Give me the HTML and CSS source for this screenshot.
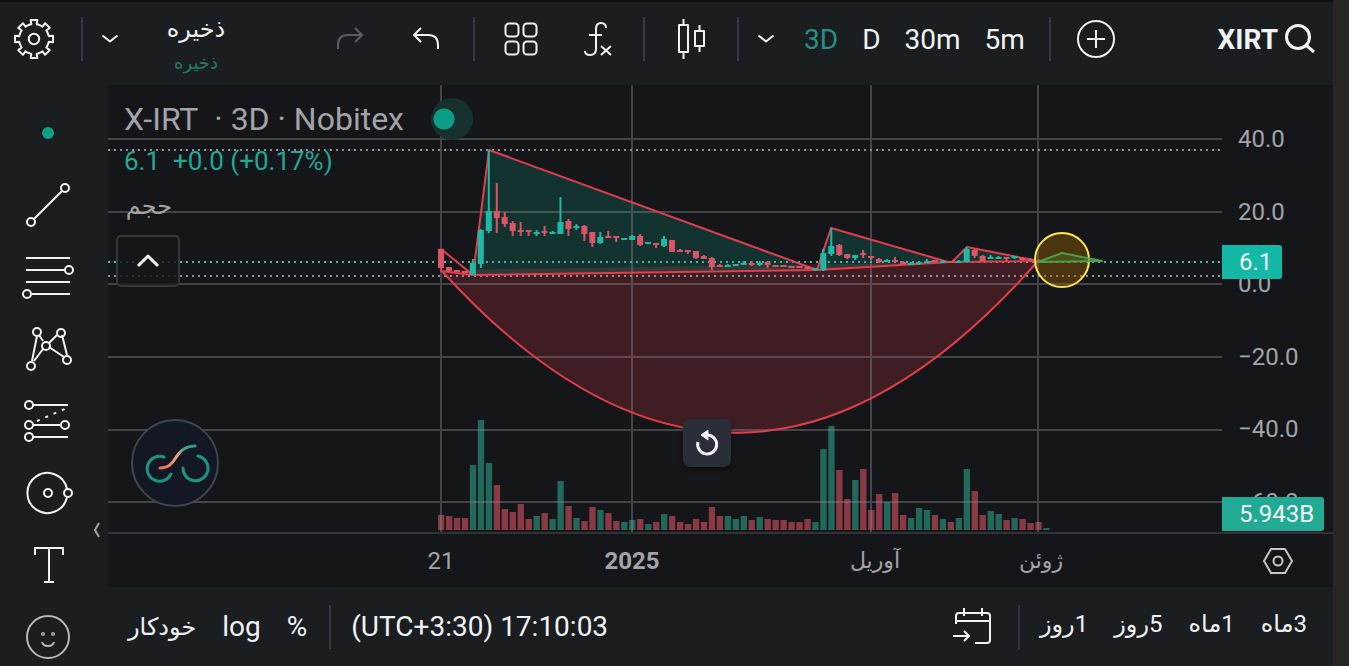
FILE: index.html
```html
<!DOCTYPE html>
<html lang="fa">
<head>
    <meta charset="UTF-8">
    <meta name="viewport" content="width=device-width, initial-scale=1.0">
    <title>XIRT 6.1</title>
    <link rel="stylesheet" href="styles.css">
</head>
<body>
    <header class="topbar">
        <div class="group group-settings">
            <button class="icon-btn" aria-label="Settings">
                <svg width="44" height="44" viewBox="-22 -22 44 44"><path id="gear" d=""/><circle r="5.2"/></svg>
            </button>
        </div>
        <div class="group group-save">
            <button class="chevron-btn" aria-label="Layouts">
                <svg width="20" height="12" viewBox="0 0 20 12"><path d="M2.500 2.500L10 8.500L17.500 2.500"/></svg>
            </button>
            <button class="save-btn" dir="rtl"><span>ذخیره</span><small>ذخیره</small></button>
            <button class="icon-btn redo" aria-label="Redo" disabled>
                <svg width="30" height="26" viewBox="0 0 30 26"><path d="M3 23V19Q3 9 13 9H27M20 2L27 9L20 16"/></svg>
            </button>
            <button class="icon-btn" aria-label="Undo">
                <svg width="30" height="26" viewBox="0 0 30 26"><path d="M27 23V19Q27 9 17 9H3M10 2L3 9L10 16"/></svg>
            </button>
        </div>
        <div class="group group-tools">
            <button class="icon-btn" aria-label="Templates">
                <svg width="36" height="36" viewBox="0 0 36 36"><rect x="2.500" y="2.500" width="13" height="13" rx="3.500"/><rect x="20.500" y="2.500" width="13" height="13" rx="3.500"/><rect x="2.500" y="20.500" width="13" height="13" rx="3.500"/><rect x="20.500" y="20.500" width="13" height="13" rx="3.500"/></svg>
            </button>
            <button class="icon-btn" aria-label="Indicators">
                <svg width="32" height="38" viewBox="0 0 32 38"><path d="M25 8Q25 3 20 3Q15 3 15 9V29Q15 35 9 35Q4 35 4 31M8 15H21M20 26L30 35M30 26L20 35"/></svg>
            </button>
        </div>
        <div class="group group-tools">
            <button class="icon-btn" aria-label="Candles">
                <svg width="30" height="42" viewBox="-1 0 30 42"><path d="M6.500 1V7M6.500 34V41M22.500 7V13M22.500 28V34"/><rect x="2" y="7" width="9" height="27"/><rect x="18" y="13" width="9" height="15"/></svg>
            </button>
        </div>
        <div class="group group-intervals">
            <button class="chevron-btn" aria-label="Intervals">
                <svg width="20" height="12" viewBox="0 0 20 12"><path d="M2.500 2.500L10 8.500L17.500 2.500"/></svg>
            </button>
            <div class="intervals">
                <button class="active">3D</button>
                <button>D</button>
                <button>30m</button>
                <button>5m</button>
            </div>
        </div>
        <div class="group group-compare">
            <button class="icon-btn" aria-label="Compare">
                <svg width="42" height="42" viewBox="0 0 42 42"><circle cx="21" cy="21" r="18"/><path d="M21 12V30M12 21H30"/></svg>
            </button>
        </div>
        <button class="symbol">XIRT
            <svg width="32" height="32" viewBox="0 0 32 32"><circle cx="14" cy="14" r="11.500"/><path d="M22 22L30 29"/></svg>
        </button>
    </header>

    <nav class="drawbar">
        <button aria-label="Cursor"><span class="dot"></span></button>
        <button aria-label="Trend line">
            <svg width="52" height="52" viewBox="0 0 52 52"><path d="M12 40L40 12"/><circle cx="9" cy="43" r="4"/><circle cx="43" cy="9" r="4"/></svg>
        </button>
        <button aria-label="Fib retracement">
            <svg width="52" height="52" viewBox="0 0 52 52"><path d="M4 7H48M4 19H43M4 31H48M10 43H48"/><circle cx="47" cy="19" r="4"/><circle cx="5" cy="43" r="4"/></svg>
        </button>
        <button aria-label="Pattern">
            <svg width="52" height="52" viewBox="0 0 52 52"><path d="M15 13L10 38M17 12L21 18M12 38L21 26M27 20L35 12M40 12L45 32M27 24L42 34"/><circle cx="15" cy="9" r="4"/><circle cx="39" cy="10" r="4"/><circle cx="24" cy="23" r="4"/><circle cx="9" cy="43" r="4"/><circle cx="45" cy="37" r="4"/></svg>
        </button>
        <button aria-label="Position">
            <svg width="52" height="52" viewBox="0 0 52 52"><path d="M11 10H46M11 30H38M11 42H46"/><path class="dots" d="M15 26L45 13"/><circle cx="7" cy="10" r="4"/><circle cx="7" cy="30" r="4"/><circle cx="43" cy="30" r="4"/><circle cx="7" cy="42" r="4"/></svg>
        </button>
        <button aria-label="Circle">
            <svg width="52" height="52" viewBox="0 0 52 52"><path d="M45 22A20 20 0 1 0 45 30"/><circle cx="26" cy="26" r="4"/><circle cx="46" cy="26" r="4"/></svg>
        </button>
        <button aria-label="Text">
            <svg width="52" height="52" viewBox="0 0 52 52"><path d="M13 16V9H41V16M27 9V43M22 43H32"/></svg>
        </button>
        <button class="faded" aria-label="Emoji">
            <svg width="52" height="52" viewBox="0 0 52 52"><circle cx="26" cy="26" r="21"/><path d="M20 31Q21 35 26 35Q31 35 32 31"/><circle class="eye" cx="21" cy="23" r="2"/><circle class="eye" cx="31" cy="23" r="2"/></svg>
        </button>
        <button class="collapse" aria-label="Hide toolbar">
            <svg width="8" height="18" viewBox="0 0 8 18"><path d="M6 2L2 9L6 16"/></svg>
        </button>
    </nav>

    <main class="chart">
        <div class="plot">
            <svg class="canvas" viewBox="108 85 1114 447" preserveAspectRatio="none">
                <g id="volume"></g>
                <path class="fill-red" d="M441 270Q740 600 1038 261Z"/>
                <path class="fill-green" d="M473 275L489 150L818 270ZM817 270L831 228L948 262ZM950 262L967 247L1038 261Z"/>
                <path class="grid-lines" d="M441 85V532M632 85V532M871 85V532M1038 85V532M108 139H1222M108 212H1222M108 284H1222M108 357H1222M108 430H1222M108 502H1222"/>
                <path class="level" d="M108 150H1222M108 276H1222"/>
                <path class="level last" d="M108 262H1222"/>
                <path class="red-line" d="M441 270Q740 600 1038 261"/>
                <path class="red-line" d="M441 249V271L473 275L818 270L950 262L1038 261L967 247L952 262L948 262L831 228L817 270L489 150L473 275L441 249"/>
                <g id="candles"></g>
                <circle class="target" cx="1062" cy="260" r="27"/>
                <path class="target-wave" d="M1038 262L1062 253L1102 261Z"/>
            </svg>

            <div class="legend">
                <h1>X-IRT&nbsp; · 3D · Nobitex <span class="status"></span></h1>
                <p class="price">6.1&nbsp; +0.0 (+0.17%)</p>
                <p class="volume-name" dir="rtl">حجم</p>
                <button class="legend-toggle" aria-label="Collapse legend">
                    <svg width="28" height="18" viewBox="0 0 28 18"><path d="M4 14L14 4L24 14"/></svg>
                </button>
            </div>

            <a class="brand" href="#" aria-label="Nobitex">
                <svg width="84" height="84" viewBox="0 0 84 84">
                    <defs>
                        <linearGradient id="ribbon" gradientUnits="userSpaceOnUse" x1="27" y1="47" x2="62" y2="25">
                            <stop offset="0" stop-color="#f0695c"/>
                            <stop offset="0.500" stop-color="#f0a583"/>
                            <stop offset="0.750" stop-color="#459d84"/>
                            <stop offset="1" stop-color="#22a493"/>
                        </linearGradient>
                    </defs>
                    <path class="ring" d="M31 36A12.500 12.500 0 1 0 38 53M50 47A12.500 12.500 0 1 0 65 35"/>
                    <path class="ribbon" d="M27 47C46 47 39 26 62 25"/>
                </svg>
            </a>
            <button class="reset" aria-label="Reset chart">
                <svg width="28" height="28" viewBox="0 0 28 28"><path d="M5 13A9.500 9.500 0 1 0 14 6"/><path class="tip" d="M15 1V11L8 6Z"/></svg>
            </button>
        </div>

        <div class="price-axis">
            <span>40.0</span>
            <span>20.0</span>
            <span>0.0</span>
            <span>−20.0</span>
            <span>−40.0</span>
            <span>−60.0</span>
            <b class="tag tag-price">6.1</b>
            <b class="tag tag-volume">5.943B</b>
        </div>

        <div class="time-axis">
            <span>21</span>
            <strong>2025</strong>
            <span dir="rtl">آوریل</span>
            <span dir="rtl">ژوئن</span>
        </div>
        <div class="axis-corner">
            <button aria-label="Axis settings">
                <svg width="32" height="28" viewBox="0 0 32 28"><path d="M9 2H23L30 14L23 26H9L2 14Z"/><circle cx="16" cy="14" r="4.500"/></svg>
            </button>
        </div>
    </main>

    <footer class="bottombar">
        <div class="scale">
            <button class="fa" dir="rtl">خودکار</button>
            <button>log</button>
            <button>%</button>
        </div>
        <button class="clock">(UTC+3:30) 17:10:03</button>
        <button class="goto" aria-label="Go to date">
            <svg width="42" height="42" viewBox="0 0 42 42"><path d="M5 18V10Q5 7 8 7H36Q39 7 39 10V34Q39 37 36 37H24M5 15H39M13 2V10M31 2V10M2 30H18M13 25L18 30L13 35"/></svg>
        </button>
        <div class="ranges">
            <button class="fa" dir="rtl">1روز</button>
            <button class="fa" dir="rtl">5روز</button>
            <button class="fa" dir="rtl">1ماه</button>
            <button class="fa" dir="rtl">3ماه</button>
        </div>
    </footer>
    <script src="script.js"></script>
</body>
</html>
```
FILE: styles.css
```css
* {
    box-sizing: border-box;
}
body {
    margin: 0;
    height: 100vh;
    display: grid;
    grid-template-columns: 108px 1fr;
    grid-template-rows: 85px 1fr 79px;
    overflow: hidden;
    background-color: #1b1e21;
    border-right: 16px solid #272625;
    color: #f0f2f5;
    font-family: Roboto, "DejaVu Sans", sans-serif;
    font-size: 24px;
}
button {
    margin: 0;
    padding: 0;
    border: none;
    background: none;
    color: inherit;
    font: inherit;
    cursor: pointer;
    display: flex;
    align-items: center;
    justify-content: center;
}
svg {
    display: block;
    flex: none;
    fill: none;
    stroke: #f0f2f5;
    stroke-width: 2;
    stroke-linejoin: round;
}

/* top toolbar */
.topbar {
    grid-column: 1 / 3;
    display: flex;
    align-items: flex-start;
    border-top: 2px solid #101114;
    padding-top: 15px;
    font-size: 28px;
}
.group {
    display: flex;
    align-items: center;
    height: 44px;
    border-right: 2px solid #373a42;
}
.icon-btn {
    width: 76px;
    height: 44px;
}
.chevron-btn {
    width: 54px;
    height: 44px;
}
.group-settings {
    width: 83px;
}
.group-settings .icon-btn {
    width: 68px;
}
.group-save {
    padding-right: 9px;
}
.save-btn {
    width: 118px;
    height: 64px;
    margin-top: 8px;
    margin-right: 57px;
    flex-direction: column;
    justify-content: space-between;
    font-size: 24px;
    line-height: 36px;
}
.save-btn small {
    color: #207c6b;
    font-size: 18px;
    line-height: 24px;
}
.redo svg {
    stroke: #5b5e63;
}
.group-tools {
    padding: 0 8px;
}
.intervals {
    display: flex;
    gap: 24px;
    padding: 0 24px 0 11px;
}
.intervals .active {
    color: #22937f;
}
.group-compare {
    border: none;
    padding-left: 7px;
}
.symbol {
    height: 44px;
    margin-left: auto;
    margin-right: 17px;
    gap: 6px;
    font-weight: bold;
}
.symbol svg {
    stroke-width: 3;
}

/* drawing tools */
.drawbar {
    grid-row: 2 / 4;
    position: relative;
    min-height: 0;
    padding: 12px 12px 0 0;
}
.drawbar button {
    width: 100%;
    height: 72px;
}
.drawbar svg {
    stroke-width: 2;
}
.drawbar .dots {
    stroke-dasharray: 3 6;
}
.drawbar .eye {
    fill: #a0a2a6;
    stroke: none;
}
.drawbar .faded svg {
    stroke: #b7b9bd;
}
.dot {
    width: 12px;
    height: 12px;
    border-radius: 50%;
    background-color: #12a085;
}
.drawbar .collapse {
    position: absolute;
    right: 4px;
    top: 433px;
    width: 14px;
    height: 24px;
}
.drawbar .collapse svg {
    stroke: #a0a2a6;
}

/* chart */
.chart {
    display: grid;
    grid-template-columns: 1fr 111px;
    grid-template-rows: 1fr 55px;
    min-height: 0;
    background-color: #151619;
    color: #a3a4a8;
}
.plot {
    position: relative;
    min-height: 0;
}
.canvas {
    position: absolute;
    width: 100%;
    height: 100%;
    stroke: none;
}
.grid-lines {
    stroke: #8a8b90;
    stroke-opacity: 0.4;
}
.level {
    stroke: #8f9196;
    stroke-width: 2;
    stroke-dasharray: 2 4;
}
.level.last {
    stroke: #4bb3a1;
}
.fill-red {
    fill: #ef3a4a;
    fill-opacity: 0.2;
}
.fill-green {
    fill: #089981;
    fill-opacity: 0.22;
}
.red-line {
    stroke: #e23d4b;
    stroke-width: 2;
}
.up {
    fill: #22b8a6;
}
.down {
    fill: #dc5468;
}
#volume .up {
    fill: #22695b;
}
#volume .down {
    fill: #8a3a44;
}
.target {
    fill: #a06a00;
    fill-opacity: 0.38;
    stroke: #fbe64d;
    stroke-width: 2;
}
.target-wave {
    fill: #4caf50;
    fill-opacity: 0.2;
    stroke: #4c9f46;
    stroke-width: 2;
}

/* legend over the plot */
.legend {
    position: absolute;
    left: 16px;
    top: 12px;
}
.legend h1 {
    display: flex;
    align-items: center;
    margin: 0;
    height: 44px;
    font-size: 32px;
    font-weight: normal;
}
.status {
    width: 42px;
    height: 42px;
    margin-left: 27px;
    border-radius: 50%;
    background: radial-gradient(circle at 13px 21px, #0c9d84 10px, #17312f 11px);
}
.legend p {
    margin: 0;
}
.legend .price {
    color: #22a896;
    font-size: 26px;
    line-height: 40px;
}
.legend .volume-name {
    width: 48px;
    font-size: 24px;
    line-height: 50px;
}
.legend-toggle {
    width: 64px;
    height: 52px;
    margin: 4px 0 0 -8px;
    border: 2px solid #35373a;
    border-radius: 5px;
    background-color: rgba(21, 22, 25, 0.8);
}
.legend-toggle svg {
    stroke-width: 3;
}
.brand {
    position: absolute;
    left: 23px;
    bottom: 25px;
    border: 2px solid #42454e;
    border-radius: 50%;
    background-color: #141724;
}
.brand svg {
    stroke-width: 3;
    stroke-linecap: round;
}
.brand .ring {
    stroke: #1d9482;
}
.brand .ribbon {
    stroke: url(#ribbon);
}
.reset {
    position: absolute;
    left: 575px;
    bottom: 65px;
    width: 48px;
    height: 48px;
    border-radius: 7px;
    background-color: #2a2e39;
    box-shadow: 0 2px 4px rgba(0, 0, 0, 0.4);
}
.reset svg {
    stroke-width: 3;
}
.reset .tip {
    fill: #f0f2f5;
    stroke-width: 1;
}

/* axes */
.price-axis {
    position: relative;
    display: flex;
    flex-direction: column;
    justify-content: space-between;
    padding: 42px 0 18px 16px;
    line-height: 24px;
}
.tag {
    position: absolute;
    left: 0;
    padding-left: 17px;
    border-radius: 0 3px 3px 0;
    color: #f0f2f5;
    font-weight: normal;
    line-height: 34px;
}
.tag-price {
    top: 160px;
    width: 60px;
    background-color: #14b8a6;
}
.tag-volume {
    bottom: 1px;
    width: 102px;
    background-color: #22ab94;
}
.time-axis {
    display: grid;
    grid-template-columns: 287fr 92fr 290fr 196fr 136fr 113fr;
    align-items: center;
    border-top: 2px solid #303337;
    text-align: center;
}
.time-axis :first-child {
    grid-column: 2;
}
.time-axis [dir] {
    font-size: 22px;
}
.axis-corner {
    display: flex;
    align-items: center;
    justify-content: center;
    border-top: 2px solid #303337;
}
.axis-corner svg {
    stroke: #c5c6ca;
}

/* bottom toolbar */
.bottombar {
    display: flex;
    align-items: center;
    padding: 0 26px 0 20px;
    font-size: 28px;
}
.bottombar .fa {
    font-size: 24px;
}
.scale,
.ranges {
    display: flex;
    align-items: center;
    gap: 26px;
}
.scale {
    height: 44px;
    padding-right: 22px;
    border-right: 2px solid #373a42;
}
.clock {
    margin-left: 20px;
    margin-right: auto;
}
.goto {
    width: 69px;
    height: 44px;
    justify-content: flex-start;
    border-right: 2px solid #303337;
}
.ranges {
    padding: 0 0 6px 20px;
}
```
FILE: script.js
```js
const SVG = 'http://www.w3.org/2000/svg';
const FIRST_X = 441;
const STEP = 7.965;
const BASE = 530;

// direction, volume, body top, body bottom, high, low
const bars = [
    ['d', 15, 249, 268, 249, 268], ['d', 14, 267, 271, 267, 272], ['d', 12, 270, 272, 270, 272], ['d', 12, 271, 273, 271, 273],
    ['u', 65, 263, 275, 259, 275], ['u', 110, 230, 264, 229, 268], ['u', 67, 211, 231, 150, 233], ['d', 45, 211, 218, 183, 233],
    ['d', 21, 217, 224, 212, 227], ['d', 18, 223, 231, 221, 236], ['d', 26, 230, 232, 222, 236], ['d', 11, 230, 232, 230, 236],
    ['u', 14, 232, 234, 230, 236], ['d', 17, 231, 233, 226, 236], ['u', 11, 232, 234, 231, 234], ['u', 49, 222, 234, 197, 234],
    ['d', 24, 221, 229, 219, 236], ['u', 12, 226, 228, 224, 230], ['d', 9, 226, 234, 225, 241], ['d', 23, 232, 243, 232, 247],
    ['u', 20, 237, 243, 232, 244], ['d', 17, 236, 238, 231, 238], ['d', 9, 236, 238, 236, 242], ['u', 8, 238, 240, 238, 240],
    ['u', 10, 236, 240, 235, 240], ['d', 11, 236, 245, 234, 246], ['u', 6, 242, 244, 242, 244], ['d', 8, 243, 245, 243, 248],
    ['u', 16, 239, 246, 236, 247], ['d', 14, 240, 252, 240, 252], ['d', 8, 250, 252, 249, 252], ['d', 6, 250, 252, 250, 254],
    ['d', 11, 251, 258, 251, 259], ['d', 8, 256, 259, 255, 259], ['d', 23, 258, 267, 257, 270], ['d', 14, 265, 267, 264, 267],
    ['u', 14, 265, 267, 264, 267], ['u', 11, 264, 266, 264, 266], ['u', 14, 263, 265, 261, 265], ['d', 10, 263, 265, 261, 266],
    ['u', 13, 263, 265, 261, 266], ['d', 11, 262, 265, 261, 268], ['d', 10, 265, 267, 265, 267], ['d', 10, 265, 267, 265, 267],
    ['d', 8, 266, 268, 266, 268], ['d', 8, 266, 268, 266, 268], ['d', 11, 267, 269, 267, 269], ['u', 8, 268, 270, 268, 271],
    ['u', 81, 253, 270, 249, 271], ['u', 104, 246, 254, 228, 256], ['d', 60, 245, 255, 244, 256], ['d', 31, 254, 258, 254, 259],
    ['u', 50, 255, 258, 255, 260], ['d', 61, 253, 255, 250, 258], ['d', 20, 256, 258, 256, 260], ['d', 36, 259, 262, 258, 263],
    ['u', 28, 260, 262, 259, 262], ['d', 37, 260, 262, 257, 262], ['d', 15, 262, 264, 261, 264], ['u', 12, 263, 265, 262, 265],
    ['u', 22, 262, 264, 262, 265], ['u', 20, 261, 263, 259, 263], ['d', 15, 260, 262, 260, 262], ['u', 11, 261, 263, 260, 263],
    ['d', 8, 261, 263, 261, 263], ['u', 12, 261, 263, 260, 263], ['u', 61, 249, 262, 247, 262], ['d', 39, 250, 256, 249, 258],
    ['d', 15, 256, 261, 255, 261], ['u', 19, 257, 259, 255, 259], ['u', 16, 257, 259, 256, 259], ['d', 10, 257, 259, 257, 261],
    ['u', 12, 256, 258, 256, 259], ['d', 11, 258, 260, 257, 260], ['d', 7, 259, 261, 258, 261], ['d', 8, 260, 262, 259, 262],
    ['u', 2]
];

function addRect(parent, cls, x, y, width, height) {
    const rect = document.createElementNS(SVG, 'rect');
    rect.setAttribute('class', cls);
    rect.setAttribute('x', x);
    rect.setAttribute('y', y);
    rect.setAttribute('width', width);
    rect.setAttribute('height', height);
    parent.appendChild(rect);
}

const volume = document.getElementById('volume');
const candles = document.getElementById('candles');

bars.forEach(([dir, vol, top, bottom, high, low], i) => {
    const x = FIRST_X + i * STEP;
    const cls = dir === 'u' ? 'up' : 'down';
    addRect(volume, cls, x - 3, BASE - vol, 6.3, vol);
    if (top) {
        addRect(candles, cls, x - 3, top, 6, bottom - top);
        addRect(candles, cls, x - 1, high, 2, low - high);
    }
});

// Gear outline with 8 teeth
const points = [];
for (let i = 0; i < 8; i++) {
    [[-0.27, 15], [-0.18, 15], [-0.17, 19.3], [0.17, 19.3], [0.18, 15], [0.27, 15]].forEach(([offset, r]) => {
        const angle = i * Math.PI / 4 + offset;
        points.push((r * Math.sin(angle)).toFixed(1) + ' ' + (-r * Math.cos(angle)).toFixed(1));
    });
}
document.getElementById('gear').setAttribute('d', 'M' + points.join('L') + 'Z');
```
